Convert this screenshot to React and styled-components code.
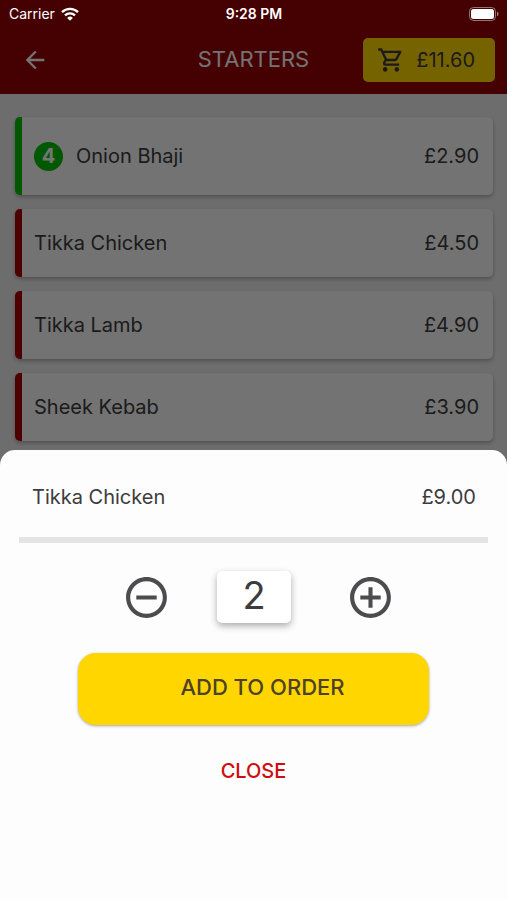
import React, { useState } from "react";
import styled, { createGlobalStyle } from "styled-components";
import {
  MdArrowBack,
  MdOutlineShoppingCart,
  MdRemoveCircleOutline,
  MdAddCircleOutline,
} from "react-icons/md";

const GlobalStyle = createGlobalStyle`
  * { box-sizing: border-box; }
  body {
    margin: 0;
    background: #eeeeee;
    color: #3c3c3e;
    font-family: Inter, "Liberation Sans", sans-serif;
    font-size: 20px;
    font-weight: 400;
    line-height: 24px;
  }
  button {
    border: 0;
    padding: 0;
    background: none;
    color: inherit;
    font: inherit;
    cursor: pointer;
  }
`;

const Screen = styled.div`
  position: relative;
  min-height: 100vh;
  overflow: hidden;
`;

const StatusBar = styled.div`
  position: absolute;
  inset: 0 0 auto;
  z-index: 2;
  display: grid;
  grid-template-columns: 1fr auto 1fr;
  align-items: center;
  height: 28px;
  padding: 0 8px 0 9px;
  color: #fff;
  font-size: 14px;
  line-height: 20px;
`;

const Carrier = styled.span`
  display: flex;
  align-items: center;
  gap: 6px;
`;

const Time = styled.time`
  font-weight: 600;
`;

const Battery = styled.svg`
  justify-self: end;
`;

const Header = styled.header`
  display: grid;
  grid-template-columns: 1fr auto 1fr;
  align-items: center;
  height: 94px;
  padding: 26px 12px 0;
  background: #960003;
  color: #fbfbfb;
`;

const Title = styled.h1`
  margin: 0;
  padding-bottom: 2px;
  font-size: 22px;
  font-weight: 400;
  line-height: 24px;
`;

const BackButton = styled.button`
  display: flex;
  justify-self: start;
  padding: 0 9px;
`;

const BasketButton = styled.button`
  display: flex;
  align-items: center;
  justify-content: space-between;
  justify-self: end;
  width: 132px;
  height: 44px;
  padding: 0 20px 0 14px;
  border-radius: 5px;
  background: #ffd800;
  color: #3c3c3e;
`;

const Menu = styled.ul`
  display: flex;
  flex-direction: column;
  gap: 14px;
  margin: 0;
  padding: 23px 14px 23px 15px;
  list-style: none;
`;

const Card = styled.li`
  display: flex;
  align-items: center;
  gap: 13px;
  min-height: ${(p) => (p.$active ? 78 : 68)}px;
  padding: 0 14px 0 12px;
  border-left: 7px solid ${(p) => (p.$active ? "#00bf00" : "#a80000")};
  border-radius: 5px;
  background: #fbfbfb;
  box-shadow: 0 2px 4px rgba(0, 0, 0, 0.28);
`;

const Badge = styled.span`
  display: grid;
  place-items: center;
  width: 29px;
  height: 29px;
  border-radius: 50%;
  background: #00bf00;
  color: #fff;
  font-weight: 700;
`;

const Price = styled.span`
  margin-left: auto;
`;

const Backdrop = styled.div`
  position: absolute;
  inset: 0;
  background: rgba(0, 0, 0, 0.54);
`;

const Sheet = styled.section`
  position: absolute;
  inset: auto 0 0;
  z-index: 1;
  display: flex;
  flex-direction: column;
  align-items: center;
  min-height: 50vh;
  padding: 0 19px;
  border-radius: 15px 15px 0 0;
  background: #fdfdfd;
`;

const SheetHeading = styled.div`
  display: flex;
  align-items: center;
  width: 100%;
  height: 93px;
  padding: 6px 12px 0 13px;
  border-bottom: 6px solid #e4e4e4;
`;

const Name = styled.h2`
  margin: 0;
  font: inherit;
`;

const Stepper = styled.div`
  display: flex;
  align-items: center;
  gap: 46px;
  margin-top: 28px;
  padding-left: 10px;
`;

const StepButton = styled.button`
  display: flex;
  color: #4c4c4e;
`;

const Quantity = styled.output`
  display: grid;
  justify-items: center;
  width: 74px;
  height: 52px;
  margin-right: 9px;
  border-radius: 5px;
  background: #fff;
  box-shadow: 0 3px 7px rgba(0, 0, 0, 0.32);
  font-size: 38px;
  line-height: 48px;
`;

const AddButton = styled.button`
  width: 75%;
  height: 72px;
  margin-top: 30px;
  padding-left: 18px;
  padding-bottom: 4px;
  border-radius: 18px;
  background: #ffd600;
  color: #4d4126;
  box-shadow: 0 1px 3px rgba(0, 0, 0, 0.35);
  font-size: 22px;
  font-weight: 500;
`;

const CloseButton = styled.button`
  margin-top: 34px;
  color: #d10c0c;
  font-weight: 500;
`;

const items = [
  { name: "Onion Bhaji", price: 2.9, count: 4 },
  { name: "Tikka Chicken", price: 4.5 },
  { name: "Tikka Lamb", price: 4.9 },
  { name: "Sheek Kebab", price: 3.9 },
];

const money = (value) => `£${value.toFixed(2)}`;

function WifiIcon() {
  return (
    <svg width="18" height="14" viewBox="0 0 18 14" fill="none" stroke="#fff" strokeWidth="2.4" aria-hidden="true">
      <path d="M1 5.1a11.6 11.6 0 0 1 16 0" />
      <path d="M4 8.4a7.3 7.3 0 0 1 10 0" />
      <path d="M9 13.8 6.1 10.9a4.2 4.2 0 0 1 5.8 0Z" fill="#fff" stroke="none" />
    </svg>
  );
}

function BatteryIcon() {
  return (
    <Battery width="30" height="14" viewBox="0 0 30 14" aria-label="Battery full">
      <rect x=".5" y=".5" width="26" height="13" rx="4" fill="none" stroke="#fff" strokeOpacity=".45" />
      <rect x="2" y="2" width="23" height="10" rx="2.5" fill="#fff" />
      <path d="M28 4.8c2 .6 2 3.8 0 4.4Z" fill="#fff" fillOpacity=".5" />
    </Battery>
  );
}

export default function App() {
  const [quantity, setQuantity] = useState(2);
  const [open, setOpen] = useState(true);

  return (
    <Screen>
      <GlobalStyle />
      <StatusBar>
        <Carrier>
          Carrier
          <WifiIcon />
        </Carrier>
        <Time>9:28 PM</Time>
        <BatteryIcon />
      </StatusBar>
      <Header>
        <BackButton aria-label="Back">
          <MdArrowBack size={28} />
        </BackButton>
        <Title>STARTERS</Title>
        <BasketButton aria-label="Basket £11.60">
          <MdOutlineShoppingCart size={28} />
          £11.60
        </BasketButton>
      </Header>
      <Menu>
        {items.map((item) => (
          <Card key={item.name} $active={Boolean(item.count)}>
            {item.count && <Badge>{item.count}</Badge>}
            <span>{item.name}</span>
            <Price>{money(item.price)}</Price>
          </Card>
        ))}
      </Menu>
      {open && (
        <>
          <Backdrop />
          <Sheet role="dialog" aria-label="Tikka Chicken">
            <SheetHeading>
              <Name>Tikka Chicken</Name>
              <Price>{money(4.5 * quantity)}</Price>
            </SheetHeading>
            <Stepper>
              <StepButton aria-label="Remove one" onClick={() => setQuantity(Math.max(1, quantity - 1))}>
                <MdRemoveCircleOutline size={49} />
              </StepButton>
              <Quantity>{quantity}</Quantity>
              <StepButton aria-label="Add one" onClick={() => setQuantity(quantity + 1)}>
                <MdAddCircleOutline size={49} />
              </StepButton>
            </Stepper>
            <AddButton>ADD TO ORDER</AddButton>
            <CloseButton onClick={() => setOpen(false)}>CLOSE</CloseButton>
          </Sheet>
        </>
      )}
    </Screen>
  );
}
